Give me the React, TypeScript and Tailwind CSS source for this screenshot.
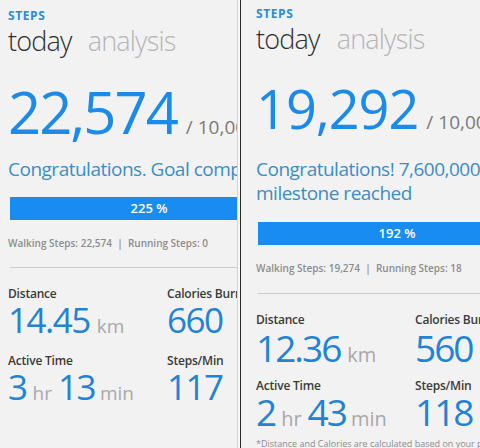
import React from "react";

function Label({ children }: { children: React.ReactNode }) {
  return (
    <div className="text-[12px] leading-[16px] font-semibold text-[#3a3a3a] tracking-[-0.2px] whitespace-nowrap">
      {children}
    </div>
  );
}

export default function App() {
  return (
    <div className="flex w-[480px] h-[448px] overflow-hidden bg-[#f2f2f2] font-['Open_Sans','Noto_Sans',sans-serif]">
      {/* LEFT PANEL */}
      <div className="w-[237px] h-[448px] flex-none overflow-hidden bg-[#f2f2f2] pl-[8px] pt-[8px]">
        <div className="text-[12px] leading-[16px] font-bold text-[#2a8bd6] tracking-[0.6px]">STEPS</div>
        <div className="flex gap-[16px] text-[27px] leading-[34px] font-light tracking-[-0.8px] whitespace-nowrap">
          <span className="text-[#2e2e2e]">today</span>
          <span className="text-[#b5b5b5]">analysis</span>
        </div>
        <div className="mt-[24px] flex items-baseline whitespace-nowrap">
          <span className="text-[58px] leading-[60px] text-[#1c8ae8] tracking-[-2px]">22,574</span>
          <span className="ml-[9px] text-[19px] leading-[19px] text-[#7a7a7a]">/ 10,000</span>
        </div>
        <div className="mt-[15px] text-[19px] leading-[24px] text-[#3b8dc5] tracking-[-0.5px] whitespace-nowrap">
          Congratulations. Goal completed!
        </div>
        <div className="mt-[16px] ml-[2px] w-[278px] h-[23px] bg-[#188cf0] flex items-center justify-center text-[13px] font-semibold text-white">
          225 %
        </div>
        <div className="mt-[16px] text-[10px] leading-[14px] font-semibold text-[#8c8c8c] whitespace-nowrap">
          Walking Steps: 22,574 &nbsp;|&nbsp; Running Steps: 0
        </div>
        <div className="mt-[17px] ml-[2px] h-px w-[300px] bg-[#cccccc]" />
        <div className="mt-[18px] flex">
          <div className="w-[159px] flex-none">
            <Label>Distance</Label>
            <div className="flex items-baseline whitespace-nowrap">
              <span className="text-[35px] leading-[36px] text-[#2183d4] tracking-[-1.5px]">14.45</span>
              <span className="ml-[7px] text-[19px] leading-[19px] text-[#a8a8a8]">km</span>
            </div>
          </div>
          <div>
            <Label>Calories Burned</Label>
            <div className="text-[35px] leading-[36px] text-[#2183d4] tracking-[-1.5px] whitespace-nowrap">660</div>
          </div>
        </div>
        <div className="mt-[15px] flex">
          <div className="w-[159px] flex-none">
            <Label>Active Time</Label>
            <div className="flex items-baseline whitespace-nowrap">
              <span className="text-[35px] leading-[36px] text-[#2183d4] tracking-[-1.5px]">3</span>
              <span className="ml-[6px] text-[19px] leading-[19px] text-[#a8a8a8]">hr</span>
              <span className="ml-[6px] text-[35px] leading-[36px] text-[#2183d4] tracking-[-1.5px]">13</span>
              <span className="ml-[5px] text-[19px] leading-[19px] text-[#a8a8a8]">min</span>
            </div>
          </div>
          <div>
            <Label>Steps/Min</Label>
            <div className="text-[35px] leading-[36px] text-[#2183d4] tracking-[-1.5px] whitespace-nowrap">117</div>
          </div>
        </div>
      </div>

      {/* SEPARATOR */}
      <div className="w-px h-[448px] flex-none bg-[#d4d4d4]" />
      <div className="w-[2px] h-[448px] flex-none bg-[#f9f9f9]" />
      <div className="w-px h-[448px] flex-none bg-[#2a2a2a]" />

      {/* RIGHT PANEL */}
      <div className="w-[239px] h-[448px] flex-none overflow-hidden bg-[#f2f2f2] pl-[15px] pt-[6px]">
        <div className="text-[12px] leading-[16px] font-bold text-[#2a8bd6] tracking-[0.6px]">STEPS</div>
        <div className="flex gap-[17px] text-[27px] leading-[34px] font-light tracking-[-0.8px] whitespace-nowrap">
          <span className="text-[#2e2e2e]">today</span>
          <span className="text-[#b5b5b5]">analysis</span>
        </div>
        <div className="mt-[24px] flex items-baseline whitespace-nowrap">
          <span className="text-[54px] leading-[56px] text-[#1c8ae8] tracking-[-1px]">19,292</span>
          <span className="ml-[8px] text-[19px] leading-[19px] text-[#7a7a7a]">/ 10,000</span>
        </div>
        <div className="mt-[21px] text-[19px] leading-[24px] text-[#3b8dc5] tracking-[-0.5px] whitespace-nowrap">
          <div>Congratulations! 7,600,000 steps</div>
          <div>milestone reached</div>
        </div>
        <div className="mt-[17px] ml-[2px] w-[278px] h-[23px] bg-[#188cf0] flex items-center justify-center text-[13px] font-semibold text-white">
          192 %
        </div>
        <div className="mt-[16px] text-[10px] leading-[14px] font-semibold text-[#8c8c8c] whitespace-nowrap">
          Walking Steps: 19,274 &nbsp;|&nbsp; Running Steps: 18
        </div>
        <div className="mt-[18px] ml-[2px] h-px w-[300px] bg-[#cccccc]" />
        <div className="mt-[18px] flex">
          <div className="w-[159px] flex-none">
            <Label>Distance</Label>
            <div className="mt-[2px] flex items-baseline whitespace-nowrap">
              <span className="text-[37px] leading-[36px] text-[#2183d4] tracking-[-2px]">12.36</span>
              <span className="ml-[7px] text-[20px] leading-[20px] text-[#a8a8a8]">km</span>
            </div>
          </div>
          <div>
            <Label>Calories Burned</Label>
            <div className="mt-[2px] text-[37px] leading-[36px] text-[#2183d4] tracking-[-2px] whitespace-nowrap">560</div>
          </div>
        </div>
        <div className="mt-[12px] flex">
          <div className="w-[159px] flex-none">
            <Label>Active Time</Label>
            <div className="flex items-baseline whitespace-nowrap">
              <span className="text-[37px] leading-[36px] text-[#2183d4] tracking-[-2px]">2</span>
              <span className="ml-[6px] text-[20px] leading-[20px] text-[#a8a8a8]">hr</span>
              <span className="ml-[6px] text-[37px] leading-[36px] text-[#2183d4] tracking-[-2px]">43</span>
              <span className="ml-[5px] text-[20px] leading-[20px] text-[#a8a8a8]">min</span>
            </div>
          </div>
          <div>
            <Label>Steps/Min</Label>
            <div className="text-[37px] leading-[36px] text-[#2183d4] tracking-[-2px] whitespace-nowrap">118</div>
          </div>
        </div>
        <div className="mt-[8px] text-[9px] leading-[12px] text-[#8c8c8c] whitespace-nowrap">
          *Distance and Calories are calculated based on your profile settings
        </div>
      </div>
    </div>
  );
}
